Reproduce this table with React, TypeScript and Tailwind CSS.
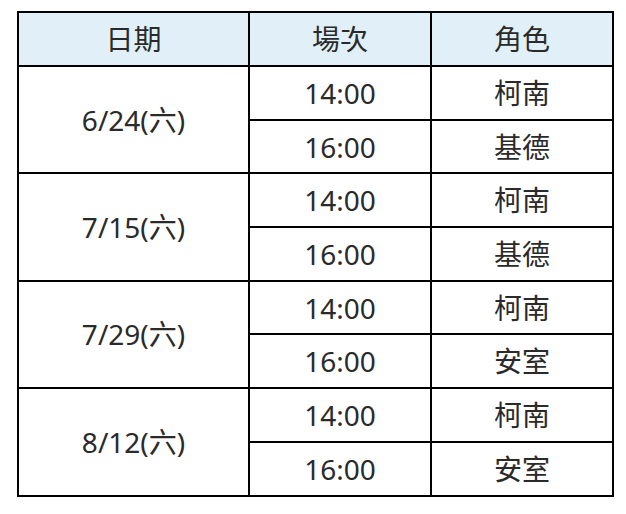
const rows = [
  { date: "6/24(六)", shows: [["14:00", "柯南"], ["16:00", "基德"]] },
  { date: "7/15(六)", shows: [["14:00", "柯南"], ["16:00", "基德"]] },
  { date: "7/29(六)", shows: [["14:00", "柯南"], ["16:00", "安室"]] },
  { date: "8/12(六)", shows: [["14:00", "柯南"], ["16:00", "安室"]] },
];

const cell = "border-2 border-black text-center align-middle p-0";

export default function App() {
  return (
    <div
      className="w-[626px] h-[514px] bg-white pl-[17px] pt-[11px] text-[#2a2a2a] text-[28px] leading-none"
      style={{ fontFamily: '"Noto Sans", "Noto Sans CJK TC", sans-serif' }}
    >
      <table className="border-collapse table-fixed w-[595px]">
        <colgroup>
          <col className="w-[231px]" />
          <col className="w-[182px]" />
          <col className="w-[182px]" />
        </colgroup>
        <thead>
          <tr className="h-[54px] bg-[#e1f0f8]">
            <th className={`${cell} font-normal`}>日期</th>
            <th className={`${cell} font-normal`}>場次</th>
            <th className={`${cell} font-normal`}>角色</th>
          </tr>
        </thead>
        <tbody>
          {rows.map((r) =>
            r.shows.map(([time, role], i) => (
              <tr key={r.date + time} className="h-[53.7px]">
                {i === 0 && (
                  <td rowSpan={2} className={cell}>
                    {r.date}
                  </td>
                )}
                <td className={cell}>{time}</td>
                <td className={cell}>{role}</td>
              </tr>
            ))
          )}
        </tbody>
      </table>
    </div>
  );
}
